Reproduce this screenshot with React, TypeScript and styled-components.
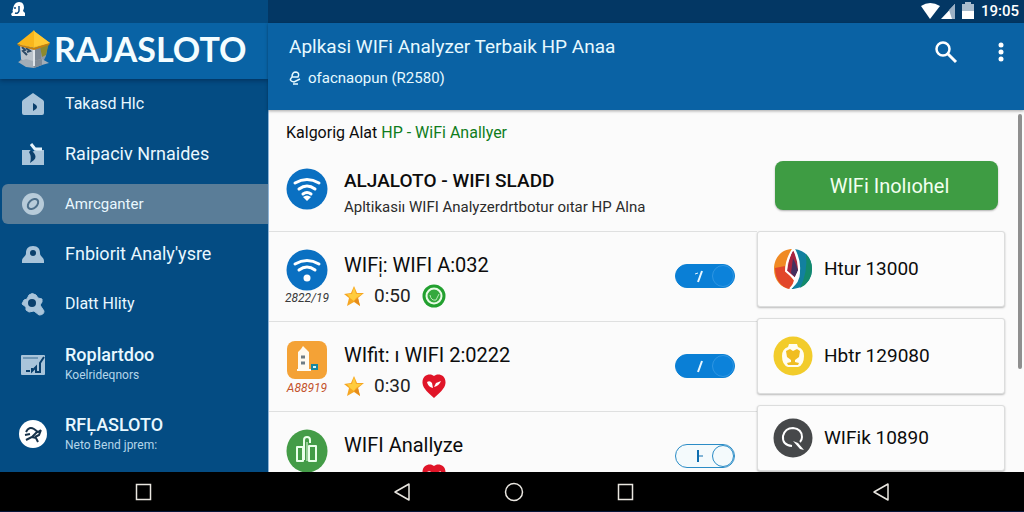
import React from "react";
import styled, { createGlobalStyle, css } from "styled-components";

const SIDEBAR = "268px";
const ASIDE = "248px";
const GUTTER = "19px";

const GlobalStyle = createGlobalStyle`
  *, *::before, *::after { box-sizing: border-box; }
  body {
    margin: 0;
    background: #000;
    font-family: Roboto, "Liberation Sans", sans-serif;
    color: #0c0c0c;
  }
  h1, h2, h3, p, ul { margin: 0; padding: 0; font-weight: 400; }
  ul { list-style: none; }
  button { border: 0; padding: 0; background: none; color: inherit; font: inherit; cursor: pointer; }
  svg { display: block; flex: none; }
`;

const Screen = styled.div`
  display: grid;
  grid-template-rows: 23px minmax(0, 1fr) 40px;
  height: 100vh;
  overflow: hidden;
`;

const StatusBar = styled.div`
  display: grid;
  grid-template-columns: ${SIDEBAR} minmax(0, 1fr);
  color: #fff;
`;

const StatusLeft = styled.div`
  display: flex;
  align-items: center;
  padding: 0 0 4px 11px;
  background: #044a80;
`;

const StatusRight = styled.div`
  display: flex;
  align-items: center;
  justify-content: flex-end;
  gap: 1px;
  padding: 0 5px 2px 0;
  background: #033764;
`;

const Clock = styled.span`
  margin-left: 4px;
  font-size: 15px;
  line-height: 20px;
  font-weight: 500;
`;

const Body = styled.div`
  display: grid;
  grid-template-columns: ${SIDEBAR} minmax(0, 1fr);
  min-height: 0;
`;

const Sidebar = styled.aside`
  display: flex;
  flex-direction: column;
  min-height: 0;
  overflow: hidden;
  background: #044c83;
  color: #e9f8ff;
`;

const Brand = styled.div`
  display: flex;
  flex: none;
  align-items: center;
  gap: 3px;
  height: 56px;
  padding: 0 0 4px 17px;
  background: #0963a5;
  box-shadow: 0 2px 4px rgba(0, 20, 50, 0.4);
`;

const BrandName = styled.h1`
  font-family: Lato, Roboto, sans-serif;
  font-size: 34px;
  line-height: 40px;
  font-weight: 700;
  color: #f4fdff;
`;

const MenuRow = styled.li<{ $tall?: boolean }>`
  display: flex;
  align-items: center;
  height: ${(p) => (p.$tall ? "70px" : "50px")};
  padding-left: 2px;
`;

const MenuLink = styled.a<{ $active?: boolean }>`
  display: flex;
  flex: 1;
  align-items: center;
  gap: 19px;
  min-height: 40px;
  padding-left: 17px;
  border-radius: 6px 0 0 6px;
  color: inherit;
  text-decoration: none;
  background: ${(p) => (p.$active ? "#5a7d98" : "transparent")};
`;

const MenuIcon = styled.span`
  display: flex;
  align-items: center;
  justify-content: center;
  width: 27px;
`;

const MenuLabel = styled.span<{ $size: number; $strong?: boolean }>`
  display: block;
  font-size: ${(p) => p.$size}px;
  line-height: 22px;
  font-weight: ${(p) => (p.$strong ? 500 : 400)};
  white-space: nowrap;
`;

const MenuNote = styled.span`
  display: block;
  font-size: 12px;
  line-height: 18px;
  color: #b4d6ea;
  white-space: nowrap;
`;

const Main = styled.main`
  display: grid;
  grid-template-rows: 87px minmax(0, 1fr);
  min-width: 0;
  min-height: 0;
`;

const Header = styled.header`
  display: flex;
  justify-content: space-between;
  padding: 11px 14px 0 21px;
  background: #0a62a4;
  color: #e6f9ff;
  z-index: 1;
  box-shadow: 0 1px 3px rgba(0, 0, 0, 0.35);
`;

const HeaderTitle = styled.h2`
  font-size: 19px;
  line-height: 26px;
  white-space: nowrap;
`;

const HeaderSub = styled.p`
  display: flex;
  align-items: center;
  gap: 7px;
  margin-top: 6px;
  font-size: 15px;
  line-height: 24px;
`;

const HeaderActions = styled.div`
  display: flex;
  align-items: flex-start;
  gap: 34px;
  color: #fff;
`;

const IconButton = styled.button<{ $width: number }>`
  display: flex;
  align-items: center;
  justify-content: center;
  width: ${(p) => p.$width}px;
  height: 36px;
`;

const Content = styled.div`
  display: flex;
  flex-direction: column;
  position: relative;
  min-height: 0;
  overflow: hidden;
  border-left: 1px solid #8fb4d6;
  background: #fbfbfb;
`;

const ScrollThumb = styled.div`
  position: absolute;
  top: 4px;
  right: 2px;
  width: 4px;
  height: 255px;
  border-radius: 2px;
  background: #8f8f8f;
`;

const Hero = styled.section`
  display: grid;
  grid-template-columns: minmax(0, 1fr) ${ASIDE} ${GUTTER};
  flex: none;
  height: 121px;
`;

const HeroMain = styled.div`
  padding: 12px 0 0 17px;
`;

const Category = styled.p`
  font-size: 16px;
  line-height: 22px;
  white-space: nowrap;
`;

const Green = styled.span`
  color: #0f7d1c;
`;

const HeroApp = styled.div`
  display: flex;
  align-items: flex-start;
  gap: 16px;
  margin-top: 24px;
`;

const HeroTitle = styled.h3`
  font-size: 19px;
  line-height: 26px;
  font-weight: 500;
  white-space: nowrap;
`;

const HeroText = styled.p`
  font-size: 15px;
  line-height: 26px;
  color: #2b2b2b;
  white-space: nowrap;
`;

const InstallButton = styled.button`
  align-self: start;
  height: 49px;
  margin: 51px 7px 0 18px;
  padding-left: 6px;
  border-radius: 8px;
  background: #3e9c43;
  box-shadow: 0 1px 2px rgba(0, 0, 0, 0.3);
  color: #f2fff0;
  font-size: 20px;
`;

const Lists = styled.div`
  display: grid;
  grid-template-columns: minmax(0, 1fr) ${ASIDE} ${GUTTER};
  grid-template-rows: minmax(0, 1fr);
  flex: 1;
  min-height: 0;
`;

const AppList = styled.ul`
  overflow: hidden;
`;

const AppRow = styled.li`
  display: flex;
  align-items: flex-start;
  gap: 16px;
  height: 90px;
  padding: 17px 22px 0 17px;
  border-top: 1px solid #dfe0e0;
`;

const AppBadge = styled.div`
  display: flex;
  flex-direction: column;
  align-items: center;
  width: 42px;
`;

const AppDate = styled.span<{ $warm?: boolean }>`
  font-size: 12px;
  line-height: 15px;
  font-style: italic;
  color: ${(p) => (p.$warm ? "#c4532c" : "#3a3a3a")};
`;

const AppText = styled.div`
  flex: 1;
  min-width: 0;
  padding-top: 2px;
`;

const AppName = styled.h3`
  font-size: 20px;
  line-height: 28px;
  white-space: nowrap;
`;

const Rating = styled.div`
  display: grid;
  grid-template-columns: 20px 38px 24px;
  align-items: center;
  height: 24px;
  margin-top: 5px;
  column-gap: 10px;
  font-size: 19px;
  line-height: 24px;
  color: #222;

  > :last-child {
    grid-column: 3;
  }
`;

const Toggle = styled.label<{ $on: boolean }>`
  display: flex;
  align-items: center;
  justify-content: space-between;
  position: relative;
  width: 60px;
  height: 24px;
  margin-top: 15px;
  padding-left: 18px;
  border: 1px solid ${(p) => (p.$on ? "#0a80d4" : "#2b8cc6")};
  border-radius: 12px;
  background: ${(p) => (p.$on ? "#0a7fd6" : "#f4fafc")};
  color: ${(p) => (p.$on ? "#e8f6ff" : "#0e6eb0")};
  cursor: pointer;
`;

const ToggleInput = styled.input`
  position: absolute;
  inset: 0;
  width: 100%;
  height: 100%;
  margin: 0;
  opacity: 0;
  cursor: pointer;
`;

const Knob = styled.span<{ $on: boolean }>`
  width: 22px;
  height: 22px;
  border-radius: 50%;
  ${(p) =>
    p.$on
      ? css`
          border: 1px solid #2f96e2;
          background: #0c82da;
        `
      : css`
          border: 1px solid #2b8cc6;
          background: #f4fafc;
        `}
`;

const CardList = styled.ul`
  display: flex;
  flex-direction: column;
  gap: 11px;
  padding-bottom: 1px;
`;

const Card = styled.li`
  display: flex;
  flex: 0 0 76px;
  align-items: center;
  gap: 11px;
  padding-left: 15px;
  border: 1px solid #dcdddd;
  border-radius: 3px;
  background: #fcfcfc;
  box-shadow: 0 1px 2px rgba(0, 0, 0, 0.25);
  font-size: 19px;
  line-height: 28px;
  white-space: nowrap;

  &:last-child {
    flex: 1 1 0;
    min-height: 0;
  }
`;

const NavBar = styled.nav`
  display: grid;
  grid-template-columns: ${SIDEBAR} minmax(0, 1fr) ${ASIDE} ${GUTTER};
  align-items: center;
  border-bottom: 1px solid #07163a;
  background: #000;
  color: #e9e6e0;
`;

const NavGroup = styled.div<{ $start?: number }>`
  display: flex;
  justify-content: ${(p) => (p.$start ? "flex-start" : "center")};
  padding-left: ${(p) => p.$start ?? 0}px;
`;

const NavButton = styled.button`
  display: flex;
  align-items: center;
  justify-content: center;
  width: 112px;
  height: 36px;
`;

/* ---------- drawings ---------- */

const TONE = "#a9c4da";
const DEEP = "#0a3f6c";

const Pagoda = () => (
  <svg width="34" height="40" viewBox="0 0 34 40">
    <path d="M3 15 16 20 31 14 29 27 25 35 18 38 2 33 5 29Z" fill="#8f9aa5" />
    <path d="M3 15 16 19V37L9 34 4 30Z" fill="#b9c2ca" />
    <path d="M16 19 24 17V35L16 37Z" fill="#7a8794" />
    <path d="M23 17 32 14 29 26 25 28Z" fill="#8c8a2e" />
    <path d="M5 18 8 21 6 22 10 26M9 19 13 22 10 23" stroke="#2c4a66" strokeWidth="2" fill="none" />
    <path d="M1 33 9 30 16 32 25 30 32 34 25 36 17 39 9 38Z" fill="#a2adb7" />
    <path d="M16 32 25 30 25 36 17 39Z" fill="#7f8b97" />
    <path d="M17 20V37" stroke="#dfe5ea" strokeWidth="2" />
    <path d="M17 1 18 3 33 14 17 19 0 15 15 3Z" fill="#f9b61c" />
    <path d="M17 2 33 14 17 18Z" fill="#ffc933" />
    <path d="M0 15 17 19 33 14 32 16 17 21 2 17Z" fill="#c77f0c" />
  </svg>
);

const HouseIcon = () => (
  <svg width="26" height="26" viewBox="0 0 26 26">
    <path d="M13 2 23 9Q24 10 24 11V22Q24 24 22 24H4Q2 24 2 22V11Q2 10 3 9Z" fill={TONE} />
    <path d="M13 12 16 14Q18 16 16 18L13 20Z" fill={DEEP} />
  </svg>
);

const FolderIcon = () => (
  <svg width="26" height="26" viewBox="0 0 26 26">
    <path d="M2 9H10L12 11 16 9H24V24H2Z" fill={TONE} />
    <path d="M11 3 15 8 22 8" stroke="#e6f3fb" strokeWidth="3" fill="none" />
    <path d="M11 9 14 12Q17 16 14 19L10 22Q12 16 9 11Z" fill={DEEP} />
  </svg>
);

const CompassIcon = () => (
  <svg width="26" height="26" viewBox="0 0 26 26">
    <circle cx="13" cy="13" r="11" fill="#b7cbd9" />
    <ellipse cx="13" cy="13" rx="6" ry="4" transform="rotate(-42 13 13)" fill="none" stroke="#4d6f8a" strokeWidth="2" />
  </svg>
);

const PersonIcon = () => (
  <svg width="26" height="26" viewBox="0 0 26 26">
    <path d="M13 5C18 5 20 8 20 12 20 16 24 16 24 20V22H2V20C2 16 6 16 6 12 6 8 8 5 13 5Z" fill={TONE} />
    <circle cx="13" cy="12" r="3" fill={DEEP} />
  </svg>
);

const GearSearchIcon = () => (
  <svg width="26" height="26" viewBox="0 0 26 26">
    <path
      d="M9 4Q12 1 16 4L18 7 22 8 22 11 20 14 24 20Q24 24 19 24L14 20 9 21 6 19 6 16 2 13 4 9 7 8Z"
      fill={TONE}
      stroke={TONE}
      strokeWidth="1"
      strokeLinejoin="round"
    />
    <circle cx="12" cy="12" r="4" fill={DEEP} />
  </svg>
);

const ChartIcon = () => (
  <svg width="26" height="26" viewBox="0 0 26 26">
    <rect x="1" y="4" width="24" height="20" rx="1" fill={TONE} />
    <path d="M3 7H18" stroke="#6f97b6" strokeWidth="2" />
    <path d="M24 6 20 12V21H16V16L12 20V17" stroke={DEEP} strokeWidth="2" fill="none" />
    <path d="M6 20H10" stroke={DEEP} strokeWidth="2" />
  </svg>
);

const RunnerIcon = () => (
  <svg width="28" height="28" viewBox="0 0 28 28">
    <circle cx="14" cy="14" r="14" fill="#fff" />
    <path
      d="M7 12Q10 6 15 9L19 12 22 10M18 12 13 17 7 20M6 15 11 14M13 17 17 18 19 22M22 10 20 15 16 17"
      stroke="#17324a"
      strokeWidth="2"
      fill="none"
    />
  </svg>
);

const WifiBadge = ({ low }: { low?: boolean }) => (
  <svg width="42" height="42" viewBox="0 0 42 42">
    <circle cx="21" cy="21" r="20.5" fill="#0a70c2" />
    <g fill="none" stroke="#fff" strokeWidth="3" strokeLinecap="round">
      <path d="M9 15Q21 8 33 15" />
      <path d="M13 21Q21 15 29 21" />
      {low && <path d="M17 26Q21 23 25 26" />}
    </g>
    {low ? <path d="M17 29Q21 26 25 29L21 33Z" fill="#fff" /> : <circle cx="21" cy="29" r="3.5" fill="#fff" />}
  </svg>
);

const TowerBadge = () => (
  <svg width="42" height="42" viewBox="0 0 42 42">
    <rect x="1" y="2" width="40" height="38" rx="8" fill="#f4a236" />
    <path d="M12 13 15 10 17 7 20 10 23 13V31H12Z" fill="#fffaf0" />
    <path d="M15 18H19M15 24H19" stroke="#6f7c84" strokeWidth="3" />
    <path d="M11 31H25" stroke="#fffaf0" strokeWidth="2" />
    <rect x="25" y="25" width="7" height="6" fill="#1687a0" />
    <path d="M27 28H30" stroke="#d9f1f4" strokeWidth="2" />
  </svg>
);

const BarsBadge = () => (
  <svg width="42" height="44" viewBox="0 0 42 44">
    <ellipse cx="21" cy="22" rx="20.5" ry="21.5" fill="#449c47" />
    <g fill="none" stroke="#eaffea" strokeWidth="2" strokeLinejoin="round">
      <path d="M11 18H17V32H11Z" />
      <path d="M18 31V11Q18 8 21 8 24 8 24 11V14" />
      <path d="M23 17H30V32H23Z" />
      <path d="M21 13V32" strokeWidth="1" />
    </g>
  </svg>
);

const Star = () => (
  <svg width="20" height="22" viewBox="0 0 20 22">
    <path d="M10 1 13 8 20 8 14 13 16 21 10 17 3 21 5 13 0 9 7 8Z" fill="#f5a623" />
    <path d="M10 2 12 9 18 9 12 13 10 16 6 13 3 9 8 9Z" fill="#ffcc3d" />
    <path d="M10 16 16 21 14 13Z" fill="#e58b1b" />
  </svg>
);

const GreenMark = () => (
  <svg width="24" height="24" viewBox="0 0 24 24">
    <circle cx="12" cy="12" r="11.5" fill="#22a02f" />
    <circle cx="12" cy="12" r="7.5" fill="#35a93e" stroke="#e9fbe6" strokeWidth="2" />
    <path d="M8 11Q9 17 14 16L17 10" stroke="#b9e8b6" strokeWidth="1" fill="none" />
  </svg>
);

const HeartMark = () => (
  <svg width="24" height="24" viewBox="0 0 24 24">
    <path d="M12 2C15-1 24 0 23.500 9 23 15 17 19 12 24 7 19 1 15 .5 9 0 0 9-1 12 2Z" fill="#e01528" />
    <path d="M5 8Q8 6 10 9L11 14Q6 13 5 8ZM19 7 14 9 12 13Q17 12 19 7Z" fill="#fff" />
  </svg>
);

const SlashMark = ({ tick }: { tick?: boolean }) => (
  <svg width="10" height="14" viewBox="0 0 10 14" fill="none" stroke="currentColor">
    <path d="M8 2 4 13" strokeWidth="2" />
    {tick && <path d="M1 5 4 4" strokeWidth="1" />}
  </svg>
);

const OffMark = () => (
  <svg width="10" height="14" viewBox="0 0 10 14" fill="none" stroke="currentColor">
    <path d="M4 1V13" strokeWidth="2" />
    <path d="M4 7H9" strokeWidth="1" />
  </svg>
);

const FlameLogo = () => (
  <svg width="40" height="42" viewBox="0 0 40 42">
    <path d="M20 1C9 1 1 9 1 21 1 32 8 40 17 41L22 34 14 24Q13 12 20 1Z" fill="#f08a24" />
    <path d="M2 20C2 31 8 40 17 41L22 34 14 24 12 18Z" fill="#e2472b" />
    <path d="M21 1C32 2 39 10 39 21 39 32 31 41 18 41Q27 34 27 25 27 12 21 1Z" fill="#12809f" />
    <path d="M33 6Q39 12 39 21 39 34 27 40 35 24 33 6Z" fill="#138a6b" />
    <path d="M20 2Q15 12 14 23L22 30 25 22Q25 12 20 2Z" fill="#a8243f" />
    <path d="M20 10Q23 16 25 22L22 29 18 25Z" fill="#44305f" />
    <path d="M20 1Q13 12 13 23L22 31 26 23Q27 12 21 1M22 31Q22 36 17 41" fill="none" stroke="#fff" strokeWidth="2" />
  </svg>
);

const YellowLogo = () => (
  <svg width="40" height="42" viewBox="0 0 40 42">
    <circle cx="20" cy="21" r="19.500" fill="#f2cc2b" />
    <path d="M16 9H24L25 12Q31 14 31 21 31 30 25 32H15Q9 30 9 21 9 14 15 12Z" fill="#fffdf2" />
    <path d="M13 16 17 14 20 16 24 14 27 16 26 22 22 25 22 27 26 28 25 30H15L14 28 18 27 18 25 14 22Z" fill="#f0bd22" />
  </svg>
);

const LensLogo = () => (
  <svg width="40" height="42" viewBox="0 0 40 42">
    <circle cx="20" cy="21" r="19.500" fill="#46484a" />
    <path d="M19 29Q9 28 10 19 12 11 20 11 29 12 29 20 29 23 27 25" fill="none" stroke="#fff" strokeWidth="2" />
    <path d="M20 24 25 26 31 33 27 32Z" fill="#fff" />
  </svg>
);

const TriangleShape = () => (
  <svg width="20" height="20" viewBox="0 0 20 20" fill="none" stroke="currentColor" strokeWidth="1.500" strokeLinejoin="round">
    <path d="M17 2V18L3 10Z" />
  </svg>
);

const SquareShape = () => (
  <svg width="20" height="20" viewBox="0 0 20 20" fill="none" stroke="currentColor" strokeWidth="1.500">
    <rect x="2.500" y="2.500" width="14" height="15" />
  </svg>
);

const CircleShape = () => (
  <svg width="20" height="20" viewBox="0 0 20 20" fill="none" stroke="currentColor" strokeWidth="1.500">
    <circle cx="10" cy="10" r="8.500" />
  </svg>
);

/* ---------- data ---------- */

const menu = [
  { label: "Takasd Hlc", size: 16, icon: <HouseIcon /> },
  { label: "Raipaciv Nrnaides", size: 18, icon: <FolderIcon /> },
  { label: "Amrcganter", size: 15, icon: <CompassIcon />, active: true },
  { label: "Fnbiorit Analy'ysre", size: 18, icon: <PersonIcon /> },
  { label: "Dlatt Hlity", size: 16, icon: <GearSearchIcon /> },
  { label: "Roplartdoo", size: 18, icon: <ChartIcon />, note: "Koelrideqnors", strong: true },
  { label: "RFĻASLOTO", size: 18, icon: <RunnerIcon />, note: "Neto Bend jprem:", strong: true },
];

const apps = [
  { name: "WIFi̩: WIFI A:032", badge: <WifiBadge />, date: "2822/19", score: "0:50", mark: <GreenMark />, on: true, toggle: <SlashMark tick /> },
  { name: "WIfit: ı WIFI 2:0222", badge: <TowerBadge />, date: "A88919", warm: true, score: "0:30", mark: <HeartMark />, on: true, toggle: <SlashMark /> },
  { name: "WIFI Anallyze", badge: <BarsBadge />, mark: <HeartMark />, on: false, toggle: <OffMark /> },
];

const cards = [
  { name: "Htur 13000", logo: <FlameLogo /> },
  { name: "Hbtr 129080", logo: <YellowLogo /> },
  { name: "WIFik 10890", logo: <LensLogo /> },
];

export default function App() {
  return (
    <>
      <GlobalStyle />
      <Screen>
        <StatusBar>
          <StatusLeft>
            <svg width="15" height="15" viewBox="0 0 15 15">
              <path d="M8 0C12 0 13 3 13 6L12 9 14 11V14H1L0 12 2 10Q1 9 2 7 3 0 8 0Z" fill="#fff" />
              <path d="M8 4V9Q7 12 4 11M4 5V7" stroke="#0b4a80" strokeWidth="1.500" fill="none" />
            </svg>
          </StatusLeft>
          <StatusRight>
            <svg width="19" height="16" viewBox="0 0 19 16">
              <path d="M0 3Q9 -3 19 3L9 16Z" fill="#fff" />
            </svg>
            <svg width="14" height="16" viewBox="0 0 14 16">
              <path d="M14 1V16H0Z" fill="#fff" />
              <path d="M8 7 14 1V16H11Z" fill="#9db1c5" />
            </svg>
            <svg width="20" height="17" viewBox="0 0 20 17">
              <path d="M6 2H9V0H15V2H18V17H6Z" fill="#fff" />
              <path d="M6 2H9V0H15V2H18V9H6Z" fill="#a9bccd" />
            </svg>
            <Clock>19:05</Clock>
          </StatusRight>
        </StatusBar>

        <Body>
          <Sidebar>
            <Brand>
              <Pagoda />
              <BrandName>RAJASLOTO</BrandName>
            </Brand>
            <ul>
              {menu.map((m) => (
                <MenuRow key={m.label} $tall={!!m.note}>
                  <MenuLink href="#" $active={m.active}>
                    <MenuIcon>{m.icon}</MenuIcon>
                    <span>
                      <MenuLabel $size={m.size} $strong={m.strong}>
                        {m.label}
                      </MenuLabel>
                      {m.note && <MenuNote>{m.note}</MenuNote>}
                    </span>
                  </MenuLink>
                </MenuRow>
              ))}
            </ul>
          </Sidebar>

          <Main>
            <Header>
              <div>
                <HeaderTitle>Aplkasi WIFi Analyzer Terbaik HP Anaa</HeaderTitle>
                <HeaderSub>
                  <svg width="12" height="14" viewBox="0 0 12 14" fill="none" stroke="currentColor" strokeWidth="1.500">
                    <path d="M3 6Q3 1 7 1 11 2 9 6L3 6Q-1 10 5 11L11 8M4 13H9" />
                  </svg>
                  ofacnaopun (R2580)
                </HeaderSub>
              </div>
              <HeaderActions>
                <IconButton $width={24} aria-label="Search">
                  <svg width="24" height="24" viewBox="0 0 24 24" fill="none" stroke="currentColor">
                    <circle cx="9" cy="9" r="6.500" strokeWidth="2.500" />
                    <path d="M14 14 22 22" strokeWidth="3" />
                  </svg>
                </IconButton>
                <IconButton $width={18} aria-label="More">
                  <svg width="6" height="20" viewBox="0 0 6 20" fill="currentColor">
                    <circle cx="3" cy="3" r="2.500" />
                    <circle cx="3" cy="10" r="2.500" />
                    <circle cx="3" cy="17" r="2.500" />
                  </svg>
                </IconButton>
              </HeaderActions>
            </Header>

            <Content>
              <Hero>
                <HeroMain>
                  <Category>
                    Kalgorig Alat <Green>HP - WiFi Anallyer</Green>
                  </Category>
                  <HeroApp>
                    <WifiBadge low />
                    <div>
                      <HeroTitle>ALJALOTO - WIFI SLADD</HeroTitle>
                      <HeroText>Apltikasiı WIFI Analyzerdrtbotur oıtar HP Alna</HeroText>
                    </div>
                  </HeroApp>
                </HeroMain>
                <InstallButton>WIFi Inolıohel</InstallButton>
              </Hero>

              <Lists>
                <AppList>
                  {apps.map((a) => (
                    <AppRow key={a.name}>
                      <AppBadge>
                        {a.badge}
                        {a.date && <AppDate $warm={a.warm}>{a.date}</AppDate>}
                      </AppBadge>
                      <AppText>
                        <AppName>{a.name}</AppName>
                        <Rating>
                          {a.score && <Star />}
                          {a.score && <span>{a.score}</span>}
                          {a.mark}
                        </Rating>
                      </AppText>
                      <Toggle $on={a.on}>
                        <ToggleInput type="checkbox" defaultChecked={a.on} aria-label={a.name} />
                        {a.toggle}
                        <Knob $on={a.on} />
                      </Toggle>
                    </AppRow>
                  ))}
                </AppList>
                <CardList>
                  {cards.map((c) => (
                    <Card key={c.name}>
                      {c.logo}
                      {c.name}
                    </Card>
                  ))}
                </CardList>
              </Lists>
              <ScrollThumb />
            </Content>
          </Main>
        </Body>

        <NavBar>
          <NavGroup $start={88}>
            <NavButton aria-label="Recent apps">
              <SquareShape />
            </NavButton>
          </NavGroup>
          <NavGroup $start={78}>
            <NavButton aria-label="Back">
              <TriangleShape />
            </NavButton>
            <NavButton aria-label="Home">
              <CircleShape />
            </NavButton>
            <NavButton aria-label="Overview">
              <SquareShape />
            </NavButton>
          </NavGroup>
          <NavGroup>
            <NavButton aria-label="Previous">
              <TriangleShape />
            </NavButton>
          </NavGroup>
        </NavBar>
      </Screen>
    </>
  );
}
